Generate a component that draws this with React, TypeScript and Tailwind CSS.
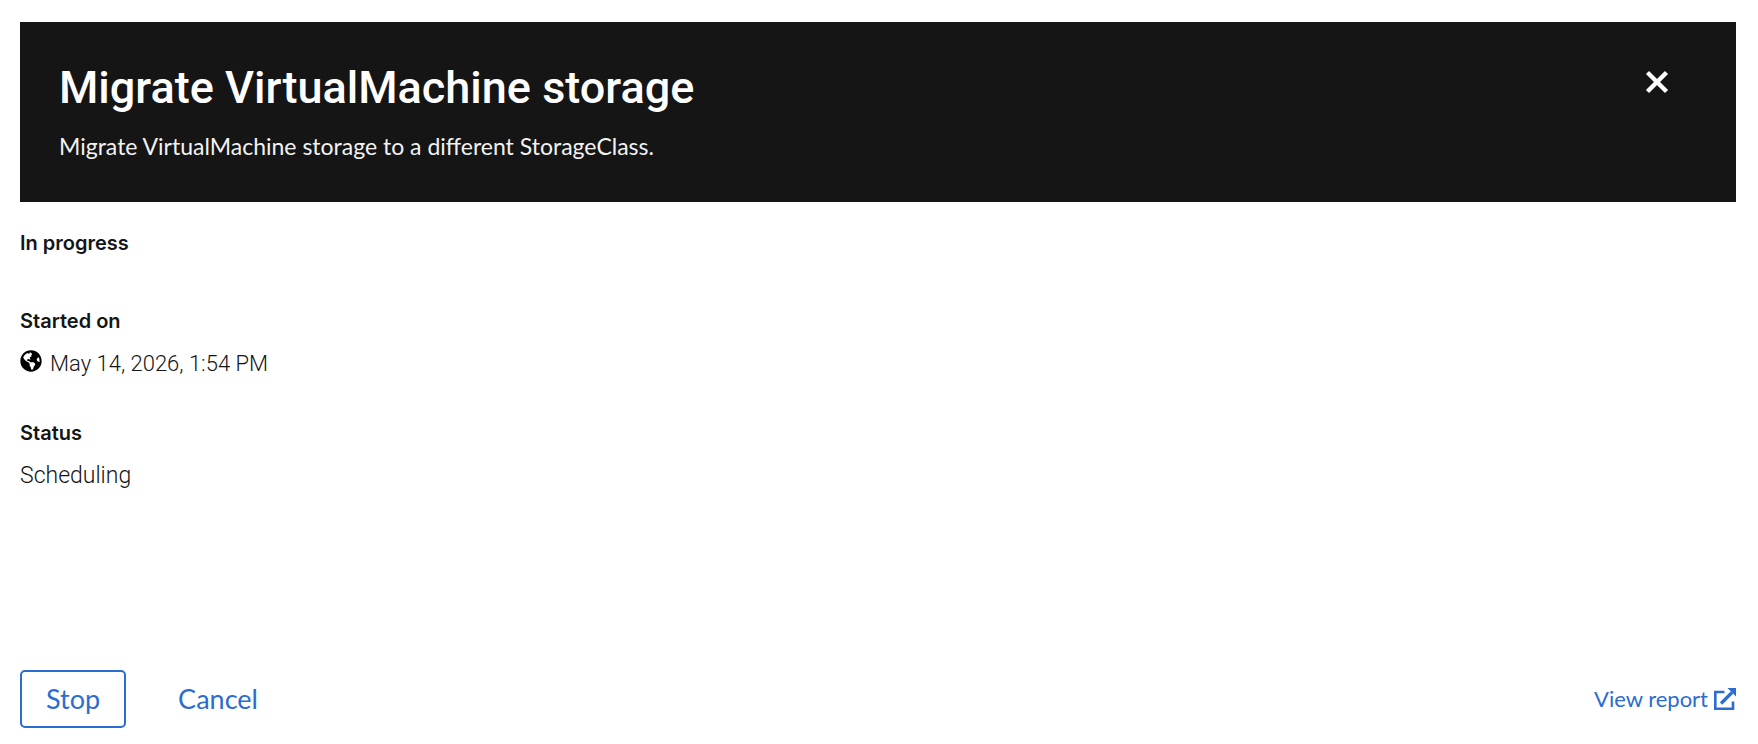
import { useState } from 'react';
import type { ReactNode } from 'react';
import { FaGlobeAmericas } from 'react-icons/fa';

interface DetailProps {
  label: string;
  children?: ReactNode;
}

function Detail({ label, children }: DetailProps) {
  return (
    <div>
      <dt className="font-['Inter',sans-serif] text-[20px] leading-[26px] font-semibold text-[#151515]">{label}</dt>
      {children && (
        <dd className="mt-4 flex items-start gap-2 font-['Roboto',sans-serif] text-[23px] leading-7 font-light text-[#151515]">{children}</dd>
      )}
    </div>
  );
}

function CloseIcon() {
  return (
    <svg viewBox="0 0 24 24" className="h-6 w-6" fill="none" aria-hidden="true">
      <path d="M2.5 2.5L21.5 21.5M21.5 2.5L2.5 21.5" stroke="currentColor" strokeWidth="4.4" />
    </svg>
  );
}

function ExternalLinkIcon() {
  return (
    <svg viewBox="0 0 22 22" className="h-[22px] w-[22px]" fill="none" aria-hidden="true">
      <path d="M10.5 4H1.3V20.7H19V13.5" stroke="currentColor" strokeWidth="2.6" />
      <path d="M7 15.5L18 4.5" stroke="currentColor" strokeWidth="3.2" />
      <path d="M13.5 0H22V8.5Z" fill="currentColor" />
    </svg>
  );
}

export default function App() {
  const [open, setOpen] = useState(true);

  if (!open) return null;

  return (
    <div className="flex min-h-screen flex-col bg-white pt-[22px] pr-[22px] pb-4 pl-5 font-['Lato',sans-serif]">
      {/* Header */}
      <header className="flex items-start justify-between bg-[#151515] px-[39px] py-[38px] text-white">
        <div>
          <h1 className="font-['Roboto',sans-serif] text-[45px] leading-[56px] font-medium">Migrate VirtualMachine storage</h1>
          <p className="mt-3 text-[23px] leading-9 text-[#f2f2f2]">
            Migrate VirtualMachine storage to a different StorageClass.
          </p>
        </div>
        <button aria-label="Close" onClick={() => setOpen(false)} className="mt-0.5 mr-5 p-2">
          <CloseIcon />
        </button>
      </header>

      {/* Migration details */}
      <dl className="flex flex-1 flex-col pt-7">
        <Detail label="In progress" />
        <div className="mt-[52px] flex flex-col gap-[42px]">
          <Detail label="Started on">
            <FaGlobeAmericas className="h-[22px] w-[22px] text-black" />
            <span className="text-[22px]">May 14, 2026, 1:54 PM</span>
          </Detail>
          <Detail label="Status">Scheduling</Detail>
        </div>
      </dl>

      {/* Actions */}
      <footer className="flex items-center justify-between text-[#2b6cd0]">
        <div className="flex items-center gap-6">
          <button className="rounded-[5px] border-2 border-[#2b6cd0] px-6 py-[11px] text-[27px] leading-8">Stop</button>
          <button className="px-7 py-[11px] text-[27px] leading-8" onClick={() => setOpen(false)}>
            Cancel
          </button>
        </div>
        <a href="#report" className="flex items-center gap-1.5 text-[22px] leading-7">
          View report
          <ExternalLinkIcon />
        </a>
      </footer>
    </div>
  );
}
